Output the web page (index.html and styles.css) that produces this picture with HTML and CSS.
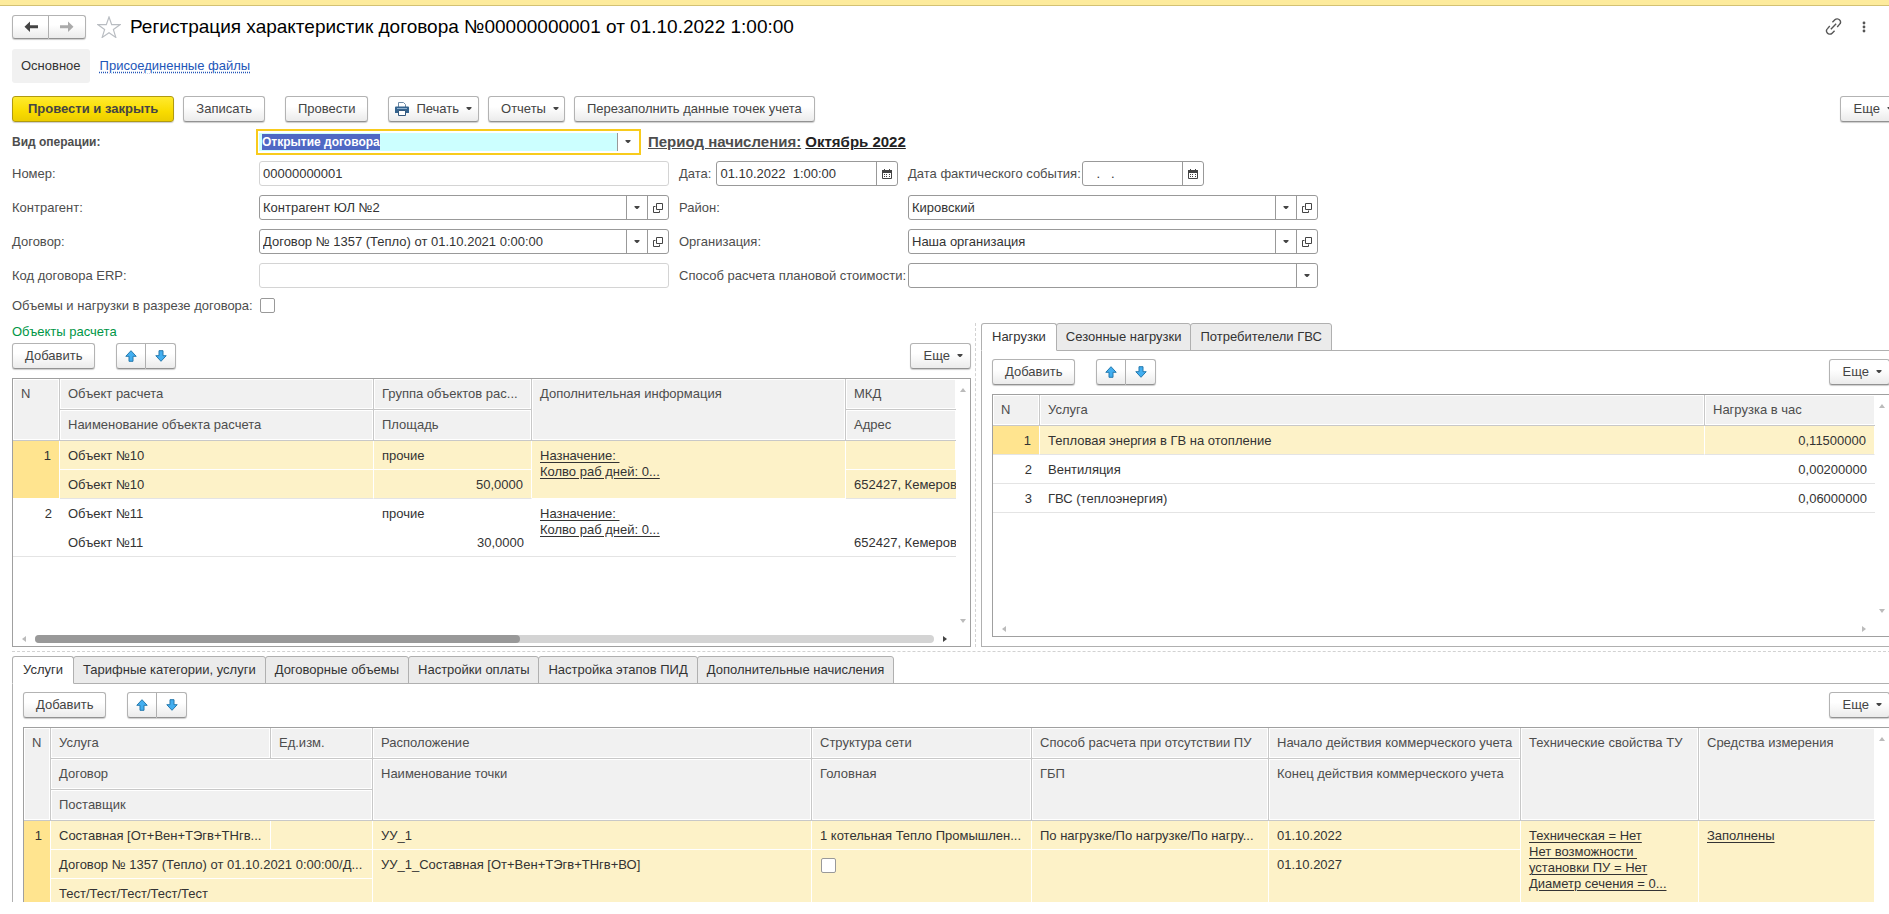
FILE: index.html
```
<!DOCTYPE html>
<html lang="ru">
<head>
  <meta charset="UTF-8">
  <meta name="viewport" content="width=device-width, initial-scale=1.0">
  <title>Регистрация характеристик договора</title>
  <link rel="stylesheet" href="styles.css">
</head>
<body>
  <svg class="sprite" aria-hidden="true">
    <symbol id="i-back" viewBox="0 0 14 12"><path d="M6 .5v3.700h8v3H6v3.800L.5 5.700z" fill="currentColor"/></symbol>
    <symbol id="i-forward" viewBox="0 0 14 12"><path d="M8 .5v3.700H0v3h8v3.800l5.500-5.300z" fill="currentColor"/></symbol>
    <symbol id="i-star" viewBox="0 0 24 22"><path d="m12 1 2.700 7.600 8.300.1-6.600 4.900 2.400 7.800-6.800-4.700-6.800 4.700 2.400-7.800L1 8.700l8.300-.1z" fill="#fff" stroke="#b9bdc2" stroke-width="1.200"/></symbol>
    <symbol id="i-caret" viewBox="0 0 6 4"><path d="M.5 0h5v1L3.500 3h-1L.5 1z" fill="currentColor"/></symbol>
    <symbol id="i-open" viewBox="0 0 10 10"><path d="M3.500.5h6v6h-6zM2.500 3.500h-2v6h6v-2" fill="none" stroke="#444"/></symbol>
    <symbol id="i-calendar" viewBox="0 0 10 10"><path d="M.5 1.500h9v8h-9z" fill="none" stroke="#444"/><path d="M0 1h10v3H0zM2 0h1v1H2zM7 0h1v1H7zM2 5h1v1H2zM4 5h1v1H4zM7 5h1v1H7zM2 7h1v1H2zM4 7h1v1H4zM7 7h1v1H7z" fill="#444"/></symbol>
    <symbol id="i-up" viewBox="0 0 12 12"><path d="m6 .7 5.200 5.600H8v5H4v-5H.8z" fill="#42aef0" stroke="#2579ad"/></symbol>
    <symbol id="i-down" viewBox="0 0 12 12"><path d="M6 11.300.8 5.700H4v-5h4v5h3.200z" fill="#42aef0" stroke="#2579ad"/></symbol>
    <symbol id="i-print" viewBox="0 0 14 14"><path d="M3.500 5V.5h5l2 2V5" fill="#fff" stroke="#6f8ba6"/><path d="M1 4.500h12a1 1 0 0 1 1 1V11H0V5.500a1 1 0 0 1 1-1z" fill="#35648f"/><path d="M3.500 8.500h7v5h-7z" fill="#fff" stroke="#35597d"/><path d="M2 6h10v1H2z" fill="#8fb0cf"/></symbol>
    <symbol id="i-link" viewBox="0 0 16 16"><g fill="none" stroke="#555" stroke-width="1.300"><path d="m7 4 2.300-2.300a3 3 0 0 1 4.500.2 3 3 0 0 1-.2 4.100L11.500 8.500M9 12l-2.300 2.300a3 3 0 0 1-4.500-.2 3 3 0 0 1 .2-4.100l2.100-2.500M5.500 10.500l5-5"/></g></symbol>
    <symbol id="i-more" viewBox="0 0 4 12"><g fill="#555"><circle cx="2" cy="2" r="1.400"/><circle cx="2" cy="6" r="1.400"/><circle cx="2" cy="10" r="1.400"/></g></symbol>
    <symbol id="i-tri-up" viewBox="0 0 6 4"><path d="M3 0 6 4H0z" fill="currentColor"/></symbol>
    <symbol id="i-tri-down" viewBox="0 0 6 4"><path d="M0 0h6L3 4z" fill="currentColor"/></symbol>
    <symbol id="i-tri-left" viewBox="0 0 4 6"><path d="M4 0v6L0 3z" fill="currentColor"/></symbol>
    <symbol id="i-tri-right" viewBox="0 0 4 6"><path d="m0 0 4 3-4 3z" fill="currentColor"/></symbol>
  </svg>

  <div class="window-strip"></div>
  <main class="form">
    <header class="title-bar">
      <div class="btn-pair nav">
        <button class="btn" aria-label="Назад"><svg width="14" height="12"><use href="#i-back"/></svg></button>
        <button class="btn disabled" aria-label="Вперед"><svg width="14" height="12"><use href="#i-forward"/></svg></button>
      </div>
      <button class="icon-btn star" aria-label="Избранное"><svg width="24" height="22"><use href="#i-star"/></svg></button>
      <h1>Регистрация характеристик договора №00000000001 от 01.10.2022 1:00:00</h1>
      <button class="icon-btn link" aria-label="Ссылка"><svg width="17" height="17"><use href="#i-link"/></svg></button>
      <button class="icon-btn" aria-label="Меню"><svg width="4" height="12"><use href="#i-more"/></svg></button>
    </header>

    <nav class="pages">
      <span class="page-current">Основное</span>
      <a href="#files">Присоединенные файлы</a>
    </nav>

    <div class="commands">
      <button class="btn primary">Провести и закрыть</button>
      <button class="btn">Записать</button>
      <button class="btn spaced">Провести</button>
      <button class="btn spaced with-icon"><svg width="14" height="14"><use href="#i-print"/></svg>Печать<svg class="caret" width="6" height="4"><use href="#i-caret"/></svg></button>
      <button class="btn menu">Отчеты<svg class="caret" width="6" height="4"><use href="#i-caret"/></svg></button>
      <button class="btn">Перезаполнить данные точек учета</button>
      <button class="btn menu more">Еще<svg class="caret" width="6" height="4"><use href="#i-caret"/></svg></button>
    </div>

    <div class="fields">
      <label class="strong" for="operation">Вид операции:</label>
      <div class="operation-row">
        <div class="field focused">
          <input id="operation" type="text" value="Открытие договора">
          <button aria-label="Выбрать"><svg width="6" height="4"><use href="#i-caret"/></svg></button>
        </div>
        <p class="period"><a href="#period">Период начисления:</a> <a class="dark" href="#period">Октябрь 2022</a></p>
      </div>

      <label for="number">Номер:</label>
      <div class="field readonly"><input id="number" type="text" value="00000000001" readonly></div>
      <div class="date-cell">
        <label for="date">Дата:</label>
        <div class="field grow">
          <input id="date" type="text" value="01.10.2022  1:00:00">
          <button aria-label="Календарь"><svg width="10" height="10"><use href="#i-calendar"/></svg></button>
        </div>
      </div>
      <div class="date-cell fact">
        <label for="fact-date">Дата фактического события:</label>
        <div class="field fact-date">
          <input id="fact-date" type="text" value="   .   .">
          <button aria-label="Календарь"><svg width="10" height="10"><use href="#i-calendar"/></svg></button>
        </div>
      </div>

      <label for="partner">Контрагент:</label>
      <div class="field">
        <input id="partner" type="text" value="Контрагент ЮЛ №2">
        <button aria-label="Выбрать"><svg width="6" height="4"><use href="#i-caret"/></svg></button>
        <button aria-label="Открыть"><svg width="10" height="10"><use href="#i-open"/></svg></button>
      </div>
      <label for="district">Район:</label>
      <div class="field">
        <input id="district" type="text" value="Кировский">
        <button aria-label="Выбрать"><svg width="6" height="4"><use href="#i-caret"/></svg></button>
        <button aria-label="Открыть"><svg width="10" height="10"><use href="#i-open"/></svg></button>
      </div>

      <label for="contract">Договор:</label>
      <div class="field">
        <input id="contract" type="text" value="Договор № 1357 (Тепло) от 01.10.2021 0:00:00">
        <button aria-label="Выбрать"><svg width="6" height="4"><use href="#i-caret"/></svg></button>
        <button aria-label="Открыть"><svg width="10" height="10"><use href="#i-open"/></svg></button>
      </div>
      <label for="company">Организация:</label>
      <div class="field">
        <input id="company" type="text" value="Наша организация">
        <button aria-label="Выбрать"><svg width="6" height="4"><use href="#i-caret"/></svg></button>
        <button aria-label="Открыть"><svg width="10" height="10"><use href="#i-open"/></svg></button>
      </div>

      <label for="erp">Код договора ERP:</label>
      <div class="field readonly"><input id="erp" type="text" readonly></div>
      <label for="method">Способ расчета плановой стоимости:</label>
      <div class="field">
        <select id="method"><option></option></select>
        <button aria-label="Выбрать"><svg width="6" height="4"><use href="#i-caret"/></svg></button>
      </div>

      <label for="by-contract">Объемы и нагрузки в разрезе договора:</label>
      <input id="by-contract" class="check" type="checkbox">
    </div>

    <div class="split">
      <section class="objects">
        <h2>Объекты расчета</h2>
        <div class="toolbar">
          <button class="btn">Добавить</button>
          <div class="btn-pair">
            <button class="btn" aria-label="Вверх"><svg width="12" height="12"><use href="#i-up"/></svg></button>
            <button class="btn" aria-label="Вниз"><svg width="12" height="12"><use href="#i-down"/></svg></button>
          </div>
          <button class="btn menu more">Еще<svg class="caret" width="6" height="4"><use href="#i-caret"/></svg></button>
        </div>
        <div class="grid-view">
          <div class="grid-body">
            <table>
              <colgroup><col class="w-47"><col class="w-314"><col class="w-158"><col class="w-314"><col></colgroup>
              <thead>
                <tr>
                  <th rowspan="2">N</th>
                  <th>Объект расчета</th>
                  <th>Группа объектов рас...</th>
                  <th rowspan="2">Дополнительная информация</th>
                  <th class="last">МКД</th>
                </tr>
                <tr><th>Наименование объекта расчета</th><th>Площадь</th><th class="last">Адрес</th></tr>
              </thead>
              <tbody class="selected">
                <tr>
                  <td class="num" rowspan="2">1</td>
                  <td>Объект №10</td>
                  <td>прочие</td>
                  <td rowspan="2"><a href="#info">Назначение:&nbsp;<br>Колво раб дней: 0...</a></td>
                  <td></td>
                </tr>
                <tr><td>Объект №10</td><td class="num">50,0000</td><td class="clip">652427, Кемеров</td></tr>
              </tbody>
              <tbody>
                <tr>
                  <td class="num" rowspan="2">2</td>
                  <td>Объект №11</td>
                  <td>прочие</td>
                  <td rowspan="2"><a href="#info">Назначение:&nbsp;<br>Колво раб дней: 0...</a></td>
                  <td></td>
                </tr>
                <tr><td>Объект №11</td><td class="num">30,0000</td><td class="clip">652427, Кемеров</td></tr>
              </tbody>
            </table>
          </div>
          <div class="scroll-y">
            <svg width="6" height="4"><use href="#i-tri-up"/></svg>
            <svg width="6" height="4"><use href="#i-tri-down"/></svg>
          </div>
          <div class="scroll-x">
            <svg width="4" height="6"><use href="#i-tri-left"/></svg>
            <div class="track"><div class="thumb"></div></div>
            <svg class="active" width="4" height="6"><use href="#i-tri-right"/></svg>
          </div>
        </div>
      </section>

      <div class="splitter-y"></div>

      <section class="tabbed">
        <div class="tabs" role="tablist">
          <button class="tab current" role="tab" aria-selected="true">Нагрузки</button>
          <button class="tab" role="tab">Сезонные нагрузки</button>
          <button class="tab" role="tab">Потребителели ГВС</button>
        </div>
        <div class="panel">
          <div class="toolbar">
            <button class="btn">Добавить</button>
            <div class="btn-pair">
              <button class="btn" aria-label="Вверх"><svg width="12" height="12"><use href="#i-up"/></svg></button>
              <button class="btn" aria-label="Вниз"><svg width="12" height="12"><use href="#i-down"/></svg></button>
            </div>
            <button class="btn menu more">Еще<svg class="caret" width="6" height="4"><use href="#i-caret"/></svg></button>
          </div>
          <div class="grid-view">
            <div class="grid-body">
              <table>
                <colgroup><col class="w-47"><col><col class="w-170"></colgroup>
                <thead>
                  <tr><th>N</th><th>Услуга</th><th class="last">Нагрузка в час</th></tr>
                </thead>
                <tbody class="selected">
                  <tr><td class="num">1</td><td>Тепловая энергия в ГВ на отопление</td><td class="num">0,11500000</td></tr>
                </tbody>
                <tbody>
                  <tr><td class="num">2</td><td>Вентиляция</td><td class="num">0,00200000</td></tr>
                </tbody>
                <tbody>
                  <tr><td class="num">3</td><td>ГВС (теплоэнергия)</td><td class="num">0,06000000</td></tr>
                </tbody>
              </table>
            </div>
            <div class="scroll-y">
              <svg width="6" height="4"><use href="#i-tri-up"/></svg>
              <svg width="6" height="4"><use href="#i-tri-down"/></svg>
            </div>
            <div class="scroll-x">
              <svg width="4" height="6"><use href="#i-tri-left"/></svg>
              <svg width="4" height="6"><use href="#i-tri-right"/></svg>
            </div>
          </div>
        </div>
      </section>
    </div>

    <div class="splitter-x"></div>

    <section class="tabbed services">
      <div class="tabs" role="tablist">
        <button class="tab current" role="tab" aria-selected="true">Услуги</button>
        <button class="tab" role="tab">Тарифные категории, услуги</button>
        <button class="tab" role="tab">Договорные объемы</button>
        <button class="tab" role="tab">Настройки оплаты</button>
        <button class="tab" role="tab">Настройка этапов ПИД</button>
        <button class="tab" role="tab">Дополнительные начисления</button>
      </div>
      <div class="panel">
        <div class="toolbar">
          <button class="btn">Добавить</button>
          <div class="btn-pair">
            <button class="btn" aria-label="Вверх"><svg width="12" height="12"><use href="#i-up"/></svg></button>
            <button class="btn" aria-label="Вниз"><svg width="12" height="12"><use href="#i-down"/></svg></button>
          </div>
          <button class="btn menu more">Еще<svg class="caret" width="6" height="4"><use href="#i-caret"/></svg></button>
        </div>
        <div class="grid-view">
          <div class="grid-body">
            <table>
              <colgroup><col class="w-27"><col class="w-220"><col class="w-102"><col><col class="w-220"><col class="w-237"><col class="w-252"><col class="w-178"><col class="w-176"></colgroup>
              <thead>
                <tr>
                  <th rowspan="3">N</th>
                  <th>Услуга</th>
                  <th>Ед.изм.</th>
                  <th>Расположение</th>
                  <th>Структура сети</th>
                  <th>Способ расчета при отсутствии ПУ</th>
                  <th>Начало действия коммерческого учета</th>
                  <th rowspan="3">Технические свойства ТУ</th>
                  <th class="last" rowspan="3">Средства измерения</th>
                </tr>
                <tr>
                  <th colspan="2">Договор</th>
                  <th rowspan="2">Наименование точки</th>
                  <th rowspan="2">Головная</th>
                  <th rowspan="2">ГБП</th>
                  <th rowspan="2">Конец действия коммерческого учета</th>
                </tr>
                <tr><th colspan="2">Поставщик</th></tr>
              </thead>
              <tbody class="selected">
                <tr>
                  <td class="num" rowspan="3">1</td>
                  <td>Составная [От+Вен+ТЭгв+ТНгв...</td>
                  <td></td>
                  <td>УУ_1</td>
                  <td>1 котельная Тепло Промышлен...</td>
                  <td>По нагрузке/По нагрузке/По нагру...</td>
                  <td>01.10.2022</td>
                  <td rowspan="3"><a href="#props">Техническая = Нет<br>Нет возможности&nbsp;<br>установки ПУ = Нет<br>Диаметр сечения = 0...</a></td>
                  <td rowspan="3"><a href="#meters">Заполнены</a></td>
                </tr>
                <tr>
                  <td colspan="2">Договор № 1357 (Тепло) от 01.10.2021 0:00:00/Д...</td>
                  <td rowspan="2">УУ_1_Составная [От+Вен+ТЭгв+ТНгв+ВО]</td>
                  <td rowspan="2"><input class="check" type="checkbox" aria-label="Головная"></td>
                  <td rowspan="2"></td>
                  <td rowspan="2">01.10.2027</td>
                </tr>
                <tr><td colspan="2">Тест/Тест/Тест/Тест/Тест</td></tr>
              </tbody>
            </table>
          </div>
          <div class="scroll-y">
            <svg width="6" height="4"><use href="#i-tri-up"/></svg>
          </div>
        </div>
      </div>
    </section>
  </main>

  <script>
    document.getElementById('operation').select();
  </script>
</body>
</html>
```
FILE: styles.css
```
* {
  box-sizing: border-box;
}
body {
  margin: 0;
  height: 100vh;
  padding-bottom: 12px;
  display: flex;
  flex-direction: column;
  overflow: hidden;
  background: #fff;
  color: #333;
  font-family: "Liberation Sans", Arial, sans-serif;
  font-size: 13px;
  line-height: 16px;
}
button, input, select {
  font: inherit;
  color: inherit;
}
svg {
  display: block;
  flex: none;
}
.sprite {
  position: absolute;
  width: 0;
  height: 0;
}
.window-strip {
  flex: none;
  height: 6px;
  background: #fdeb9c;
  border-bottom: 1px solid #d3c173;
}
/* the form is a little wider than the window */
.form {
  flex: 1;
  min-height: 0;
  margin-right: -12px;
  padding: 8px 0 0 12px;
  display: flex;
  flex-direction: column;
  overflow: hidden;
}

/* buttons */
.btn {
  display: flex;
  align-items: center;
  justify-content: center;
  height: 26px;
  padding: 0 12px;
  border: 1px solid #b3b3b3;
  border-bottom-color: #929292;
  border-radius: 3px;
  background: linear-gradient(#fff 40%, #ebebeb);
  box-shadow: 0 1px 1px rgba(0, 0, 0, 0.2);
  color: #444;
  white-space: nowrap;
}
.btn.primary {
  padding: 0 15px;
  background: linear-gradient(#ffea2e, #f9dc00 60%, #eccd00);
  border-color: #b09a10;
  font-weight: bold;
}
.btn.menu {
  padding-right: 5px;
}
.btn.more {
  margin-left: auto;
  padding: 0 7px 0 13px;
}
.caret {
  margin-left: 7px;
}
.btn.with-icon {
  padding: 0 6px;
}
.with-icon svg:first-child {
  margin-right: 7px;
}
.btn-pair {
  display: flex;
}
.btn-pair .btn {
  width: 30px;
  padding: 0;
}
.btn-pair .btn:first-child {
  border-radius: 3px 0 0 3px;
}
.btn-pair .btn:last-child {
  border-left: 0;
  border-radius: 0 3px 3px 0;
}
.nav .btn {
  width: 37px;
  height: 24px;
}
.nav .btn.disabled {
  color: #aaa;
}
.icon-btn {
  padding: 0;
  border: 0;
  background: none;
}

/* header */
.title-bar {
  flex: none;
  display: flex;
  align-items: center;
  height: 25px;
  padding-right: 35px;
}
.star {
  margin: 0 9px 0 11px;
}
h1 {
  flex: 1;
  margin: 0;
  font-size: 19px;
  line-height: 24px;
  font-weight: normal;
  color: #000;
  white-space: nowrap;
}
.link {
  margin-right: 20px;
}
.pages {
  flex: none;
  display: flex;
  align-items: center;
  gap: 10px;
  margin-top: 10px;
}
.page-current {
  padding: 9px;
  border-radius: 3px;
  background: #f1f1f1;
}
.pages a {
  color: #2256b8;
  text-decoration: underline dotted;
  text-underline-offset: 2px;
}
.commands {
  flex: none;
  display: flex;
  gap: 9px;
  margin-top: 13px;
}
.spaced {
  margin-left: 11px;
}

/* fields */
.fields {
  flex: none;
  display: grid;
  grid-template-columns: 237px 410px 219px 410px;
  gap: 9px 10px;
  align-items: center;
  margin-top: 10px;
}
.fields label {
  color: #4d4d4d;
  white-space: nowrap;
}
.fields .strong {
  font-size: 12px;
  font-weight: bold;
}
.operation-row {
  grid-column: 2 / -1;
  display: flex;
  align-items: center;
  gap: 10px;
}
.date-cell {
  display: flex;
  align-items: center;
  gap: 5px;
  min-width: 0;
}
.date-cell.fact {
  gap: 1px;
}
.field {
  display: flex;
  height: 25px;
  min-width: 0;
  border: 1px solid #999;
  border-radius: 3px;
  background: #fff;
}
.field.readonly {
  border-color: #d4d4d4;
}
.field.grow {
  flex: 1;
}
.field.fact-date {
  width: 122px;
}
.field input, .field select {
  flex: 1;
  min-width: 0;
  padding: 0 3px;
  border: 0;
  outline: 0;
  background: none;
  appearance: none;
  white-space: pre;
}
.field button {
  flex: none;
  display: flex;
  align-items: center;
  justify-content: center;
  width: 21px;
  padding: 0;
  border: 0;
  border-left: 1px solid #999;
  background: none;
  color: #444;
}
.field.focused {
  width: 379px;
  height: 20px;
  padding: 1px 0;
  border: 0;
  border-radius: 0;
  outline: 2px solid #f8cb1c;
  outline-offset: 1px;
}
.focused input {
  background: #ccffff;
  font-size: 12px;
  font-weight: bold;
}
.focused input::selection {
  background: #4f68c4;
  color: #fff;
}
.period {
  margin: 0;
  font-size: 15px;
  font-weight: bold;
}
.period a {
  color: #4d4d4d;
}
.period .dark {
  color: #222;
}
.check {
  appearance: none;
  display: block;
  width: 15px;
  height: 15px;
  margin: 1px;
  border: 1px solid #999;
  border-radius: 2px;
  background: #fff;
}

/* tables */
.split {
  flex: none;
  display: grid;
  grid-template-columns: minmax(0, 959fr) 10px minmax(0, 920fr);
  margin-top: 9px;
}
.splitter-y {
  width: 1px;
  margin-left: 4px;
  border-left: 1px dashed #d2d2d2;
}
.splitter-x {
  flex: none;
  margin: 4px 0;
  border-top: 1px dashed #d2d2d2;
}
h2 {
  margin: 1px 0 3px;
  font-size: 13px;
  line-height: 16px;
  font-weight: normal;
  color: #009646;
}
.toolbar {
  display: flex;
  gap: 21px;
}
.grid-view {
  display: grid;
  grid-template: 1fr auto / minmax(0, 1fr) 14px;
  margin-top: 9px;
  border: 1px solid #a0a0a0;
}
.objects .grid-view {
  min-height: 269px;
}
.grid-body {
  overflow: hidden;
}
.scroll-y {
  display: flex;
  flex-direction: column;
  align-items: center;
  justify-content: space-between;
  padding: 9px 0 9px;
  color: #bbb;
}
.scroll-x {
  display: flex;
  align-items: center;
  justify-content: space-between;
  gap: 9px;
  height: 14px;
  padding: 0 9px;
  color: #bbb;
}
.scroll-x .active {
  color: #444;
}
.track {
  flex: 1;
  height: 8px;
  border-radius: 4px;
  background: #d4d4d4;
}
.thumb {
  width: 54%;
  height: 8px;
  border-radius: 4px;
  background: #999;
}
table {
  width: 100%;
  table-layout: fixed;
  border-collapse: separate;
  border-spacing: 0;
}
.w-27 { width: 27px; }
.w-47 { width: 47px; }
.w-102 { width: 102px; }
.w-158 { width: 158px; }
.w-170 { width: 170px; }
.w-176 { width: 176px; }
.w-178 { width: 178px; }
.w-220 { width: 220px; }
.w-237 { width: 237px; }
.w-252 { width: 252px; }
.w-314 { width: 314px; }
th, td {
  height: 29px;
  overflow: hidden;
  text-align: left;
  text-overflow: ellipsis;
  vertical-align: top;
  white-space: nowrap;
}
th {
  height: 31px;
  padding: 7px 3px 7px 8px;
  border-right: 1px solid #c8c8c8;
  border-bottom: 1px solid #c8c8c8;
  background: #f1f1f1;
  box-shadow: inset 0 0 0 1px #fff;
  color: #4d4d4d;
  font-weight: normal;
}
th.last {
  border-right: 0;
}
td {
  padding: 7px 3px 5px 8px;
  border-bottom: 1px solid transparent;
}
tbody tr:last-child td, td[rowspan] {
  border-bottom-color: #e4e4e4;
}
.selected td {
  background: #fdf2c8;
  border-right: 1px solid #fff;
  border-bottom-color: #fff;
}
.selected tr:first-child td:first-child {
  background: #ffe48f;
}
td.num {
  padding-right: 8px;
  text-align: right;
}
td.clip {
  padding-right: 0;
  border-right: 0;
  text-overflow: clip;
}
td a {
  color: inherit;
  text-underline-offset: 2px;
}

/* tabs */
.tabbed {
  display: flex;
  flex-direction: column;
}
.tabs {
  display: flex;
}
.tab {
  height: 28px;
  margin-left: -1px;
  padding: 0 9px;
  border: 1px solid #b0b0b0;
  border-radius: 3px 3px 0 0;
  background: #ebebeb;
}
.tab.current {
  z-index: 1;
  margin-left: 0;
  padding: 0 10px;
  border-bottom-color: #fff;
  background: #fff;
}
.panel {
  flex: 1;
  display: flex;
  flex-direction: column;
  margin-top: -1px;
  padding: 8px 10px 9px;
  border: 1px solid #b0b0b0;
}
.panel .grid-view {
  flex: 1;
}
.services {
  flex: 1 0 auto;
}
```
